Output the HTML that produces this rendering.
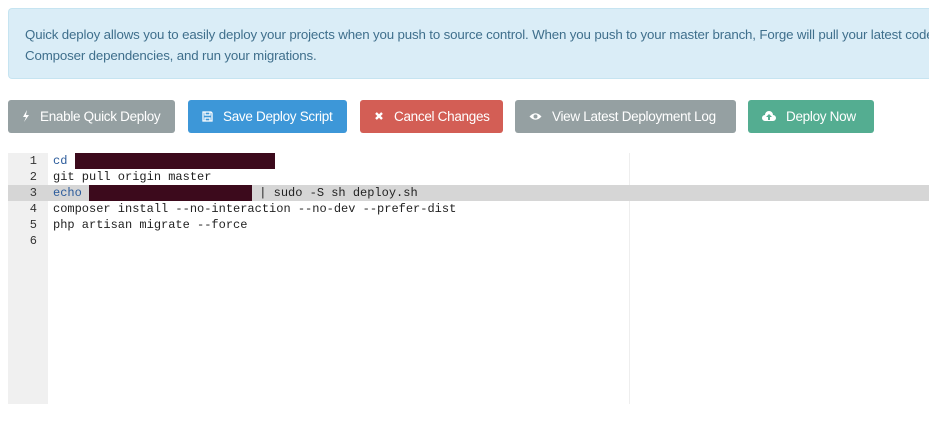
<!DOCTYPE html>
<html><head><meta charset="utf-8"><style>
body{margin:0;width:929px;height:427px;background:#fff;overflow:hidden;font-family:"Liberation Sans",sans-serif;position:relative}
.alert{position:absolute;left:8px;top:8px;width:921px;height:71px;background:#daedf7;border:1px solid #c6e4f1;border-right:none;border-radius:4px 0 0 4px;box-sizing:border-box;color:#3f6f8c;font-size:13.3px;line-height:21px;padding:15px 0 0 16px;white-space:nowrap;letter-spacing:-0.15px;overflow:hidden}
.btn{position:absolute;top:100px;height:33px;border-radius:3px;color:#fff;font-size:13.5px;line-height:33px;box-sizing:border-box;padding-left:14px;white-space:nowrap;letter-spacing:-0.3px}
.btn svg{vertical-align:middle;margin-right:10px;position:relative;top:-1px}
.ed{position:absolute;left:8px;top:153px;width:921px;height:251px}
.gut{position:absolute;left:0;top:0;width:40px;height:251px;background:#f0f0f0}
.pm{position:absolute;left:621px;top:0;width:1px;height:251px;background:#eee}
.ln{position:absolute;left:0;width:921px;height:16px;font-family:"Liberation Mono",monospace;font-size:12px;line-height:16px;color:#222;white-space:pre;overflow:hidden}
.ln .n{display:inline-block;width:29px;text-align:right;margin-right:16px;color:#333}
.hl{background:#d6d6d6}
.k{color:#2b5b9b}
.r{display:inline-block;background:#3c0a1c;height:16px;vertical-align:top}
</style></head><body>
<div class="alert">Quick deploy allows you to easily deploy your projects when you push to source control. When you push to your master branch, Forge will pull your latest code, install your<br>Composer dependencies, and run your migrations.</div>
<div class="btn" style="left:8px;width:167px;background:#95a0a2"><svg width="8" height="12" viewBox="0 0 8 12"><path d="M5 0L1 7h3l-2 5 5-7H4z" fill="#fff"/></svg>Enable Quick Deploy</div>
<div class="btn" style="left:188px;width:159px;background:#3d97d8"><svg width="11" height="11" viewBox="0 0 11 11"><path d="M1 1h8l1 1v8H1z M3 1v3h5V1 M3 7h5v3H3z" fill="none" stroke="#fff" stroke-width="1.3"/></svg>Save Deploy Script</div>
<div class="btn" style="left:360px;width:143px;background:#d35e55"><svg width="10" height="10" viewBox="0 0 10 10"><path d="M2 2l6 6M8 2l-6 6" stroke="#fff" stroke-width="2.4"/></svg>Cancel Changes</div>
<div class="btn" style="left:515px;width:221px;background:#95a0a2"><svg width="13" height="9" viewBox="0 0 13 9"><path d="M0.5 4.5Q6.5 -2 12.5 4.5Q6.5 11 0.5 4.5z" fill="#fff"/><circle cx="6.5" cy="4.5" r="2" fill="#95a0a2"/></svg>View Latest Deployment Log</div>
<div class="btn" style="left:748px;width:126px;background:#54ad91"><svg width="14" height="10" viewBox="0 0 14 10"><path d="M3 10a3 3 0 0 1 0-6a4 4 0 0 1 8 0a3 3 0 0 1 0 6z" fill="#fff"/><path d="M7 3l-3 3h2v3h2V6h2z" fill="#54ad91"/></svg>Deploy Now</div>
<div class="ed">
<div class="gut"></div><div class="pm"></div>
<div class="ln" style="top:0"><span class="n">1</span><span class="k">cd </span><span class="r" style="width:200px"></span></div>
<div class="ln" style="top:16px"><span class="n">2</span>git pull origin master</div>
<div class="ln hl" style="top:32px"><span class="n">3</span><span class="k">echo </span><span class="r" style="width:163px"></span> | sudo -S sh deploy.sh</div>
<div class="ln" style="top:48px"><span class="n">4</span>composer install --no-interaction --no-dev --prefer-dist</div>
<div class="ln" style="top:64px"><span class="n">5</span>php artisan migrate --force</div>
<div class="ln" style="top:80px"><span class="n">6</span></div>
</div>
</body></html>
